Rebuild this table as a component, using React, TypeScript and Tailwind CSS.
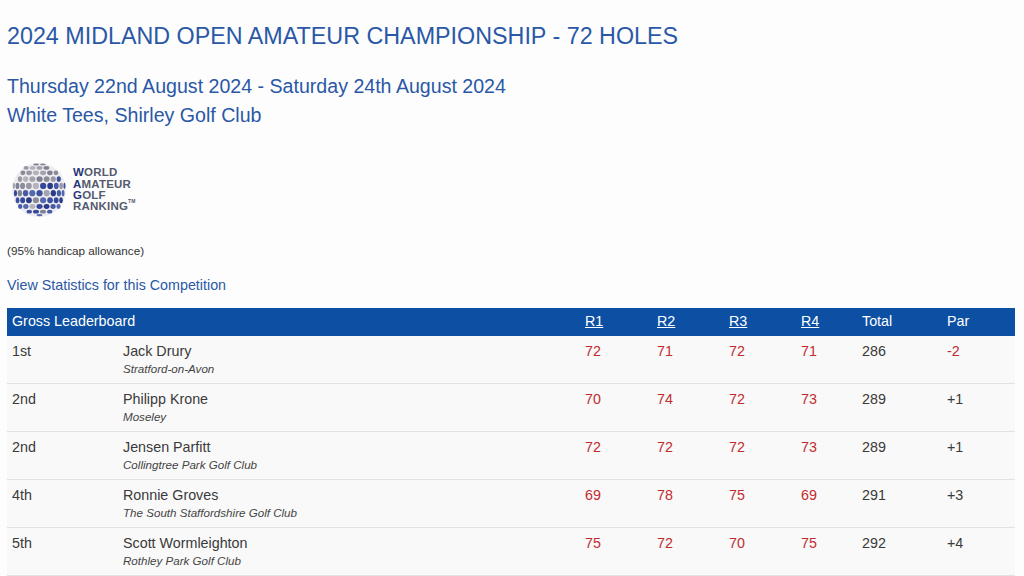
const rows = [
  { pos: "1st", name: "Jack Drury", club: "Stratford-on-Avon", r: [72, 71, 72, 71], total: 286, par: "-2" },
  { pos: "2nd", name: "Philipp Krone", club: "Moseley", r: [70, 74, 72, 73], total: 289, par: "+1" },
  { pos: "2nd", name: "Jensen Parfitt", club: "Collingtree Park Golf Club", r: [72, 72, 72, 73], total: 289, par: "+1" },
  { pos: "4th", name: "Ronnie Groves", club: "The South Staffordshire Golf Club", r: [69, 78, 75, 69], total: 291, par: "+3" },
  { pos: "5th", name: "Scott Wormleighton", club: "Rothley Park Golf Club", r: [75, 72, 70, 75], total: 292, par: "+4" },
];

const cols = "grid grid-cols-[111px_462px_72px_72px_72px_61px_85px_73px]";

// dimpled ball: dots placed on a sphere and projected, grey on top, navy band across the middle
function GolfBall() {
  const R = 27;
  const dots: { x: number; y: number; rx: number; ry: number; c: string }[] = [];
  const greys = ["#a3a3ad", "#8c8c99", "#b5b2b9", "#7f8090", "#9898a6"];
  const blues = ["#34479a", "#2a3b88", "#4859a6", "#5568ad", "#3d4f9e"];
  const step = 0.27;
  let i = 0;
  let row = 0;
  for (let b = -1.5; b <= 1.5; b += step, row++) {
    for (let a = -1.6; a <= 1.6; a += step) {
      const aa = a + (row % 2) * step * 0.5;
      const x = R * Math.sin(aa) * Math.cos(b * 0.3);
      const y = R * Math.sin(b);
      const d = Math.sqrt(x * x + y * y);
      if (d > R - 1.2) continue;
      i++;
      const band = y + 0.45 * x;
      const isBlue = band > -4 ? (i * 5) % 7 !== 0 : (i * 3) % 5 === 0 && band > -12;
      const c = isBlue ? blues[i % 5] : greys[(i * 3) % 5];
      dots.push({
        x: R + x,
        y: R + y,
        rx: Math.max(0.9, 0.43 * R * step * Math.abs(Math.cos(aa)) * Math.cos(b * 0.3)),
        ry: Math.max(0.9, 0.43 * R * step * Math.abs(Math.cos(b))),
        c,
      });
    }
  }
  return (
    <svg width="56" height="56" viewBox="-1 -1 56 56">
      <circle cx={R} cy={R} r={R} fill="#ededf1" />
      {dots.map((d, k) => (
        <ellipse key={k} cx={d.x} cy={d.y} rx={d.rx} ry={d.ry} fill={d.c} />
      ))}
    </svg>
  );
}

export default function App() {
  return (
    <div className="min-h-[576px] bg-[#fdfdfd] pl-[7px] pr-[9px] font-['Liberation_Sans',Arial,sans-serif]">
      <h1 className="pt-[22px] text-[23.3px] leading-[28px] text-[#2a58a6]">
        2024 MIDLAND OPEN AMATEUR CHAMPIONSHIP - 72 HOLES
      </h1>
      <div className="mt-[22px] text-[19.6px] leading-[29px] text-[#2a58a6]">
        <div>Thursday 22nd August 2024 - Saturday 24th August 2024</div>
        <div>White Tees, Shirley Golf Club</div>
      </div>

      {/* WAGR logo */}
      <div className="mt-[32px] flex h-[56px] items-center gap-[6px] pl-[4px]">
        <GolfBall />
        <div className="text-[11.5px] leading-[11.3px] font-bold tracking-[0.2px] text-[#555a6e]">
          <div><span className="text-[#27357a]">W</span>ORLD</div>
          <div><span className="text-[#27357a]">A</span>MATEUR</div>
          <div><span className="text-[#27357a]">G</span>OLF</div>
          <div>RANKING<sup className="text-[5px] align-super">TM</sup></div>
        </div>
      </div>

      <p className="mt-[26px] text-[11.7px] leading-[14px] text-[#333]">(95% handicap allowance)</p>
      <a className="mt-[18px] block text-[14.3px] leading-[18px] text-[#2a58a6]">
        View Statistics for this Competition
      </a>

      <div className="mt-[14px] w-[1008px]">
        <div className={`${cols} h-[28px] items-center bg-[#0c4fa3] text-[14.3px] text-white`}>
          <div className="col-span-2 pl-[5px]">Gross Leaderboard</div>
          <div className="pl-[5px] underline">R1</div>
          <div className="pl-[5px] underline">R2</div>
          <div className="pl-[5px] underline">R3</div>
          <div className="pl-[5px] underline">R4</div>
          <div className="pl-[5px]">Total</div>
          <div className="pl-[5px]">Par</div>
        </div>
        {rows.map((row, idx) => (
          <div
            key={idx}
            className={`${cols} h-[48px] border-b border-[#e2e2e2] bg-[#f9f9f9] pt-[5px] text-[14.3px] leading-[20px] text-[#3a3a3a]`}
          >
            <div className="pl-[5px]">{row.pos}</div>
            <div className="pl-[5px]">
              <div>{row.name}</div>
              <div className="text-[11.6px] leading-[16px] italic text-[#444]">{row.club}</div>
            </div>
            {row.r.map((s, k) => (
              <div key={k} className="pl-[5px] text-[#c32b2f]">{s}</div>
            ))}
            <div className="pl-[5px]">{row.total}</div>
            <div className={`pl-[5px] ${row.par.startsWith("-") ? "text-[#c32b2f]" : ""}`}>{row.par}</div>
          </div>
        ))}
      </div>
    </div>
  );
}
